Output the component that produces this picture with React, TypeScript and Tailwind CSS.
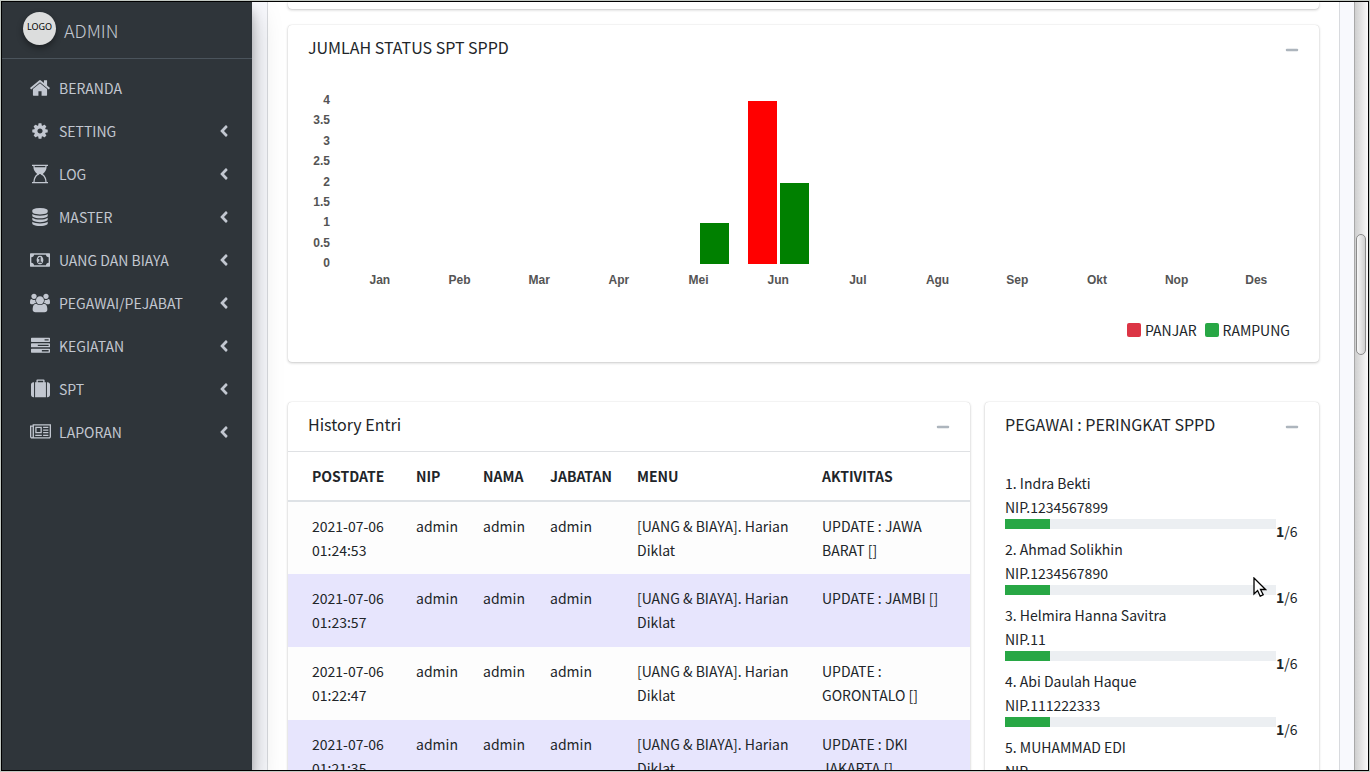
import type { ReactNode } from "react";
import { FaAngleLeft, FaMinus } from "react-icons/fa";

type Glyph = { box: string; d: string; width: string };

const glyphs: Record<string, Glyph> = {
  home: {
    box: "0 0 1792 1792",
    width: "w-[22px]",
    d: "M1472 992v480q0 26-19 45t-45 19h-384v-384h-256v384h-384q-26 0-45-19t-19-45v-480q0-1 .5-3t.5-3l575-474 575 474q1 2 1 6zm223-69l-62 74q-8 9-21 11h-3q-13 0-21-7l-692-577-692 577q-12 8-24 7-13-2-21-11l-62-74q-8-10-7-23.5t11-21.5l719-599q32-26 76-26t76 26l244 204v-195q0-14 9-23t23-9h192q14 0 23 9t9 23v408l219 182q10 8 11 21.5t-7 23.5z",
  },
  cog: {
    box: "0 0 1792 1792",
    width: "w-[18px]",
    d: "M1152 896q0-106-75-181t-181-75-181 75-75 181 75 181 181 75 181-75 75-181zm512-109v222q0 12-8 23t-20 13l-185 28q-19 54-39 91 35 50 107 138 10 12 10 25t-9 23q-27 37-99 108t-94 71q-12 0-26-9l-138-108q-44 23-91 38-16 136-29 186-7 28-36 28h-222q-14 0-24.5-8.5t-11.5-21.5l-28-184q-49-16-90-37l-141 107q-10 9-25 9-14 0-25-11-126-114-165-168-7-10-7-23 0-12 8-23 15-21 51-66.5t54-70.5q-27-50-41-99l-183-27q-13-2-21-12.5t-8-23.5v-222q0-12 8-23t19-13l186-28q14-46 39-92-40-57-107-138-10-12-10-24 0-10 9-23 26-36 98.5-107.5t94.5-71.5q13 0 26 10l138 107q44-23 91-38 16-136 29-186 7-28 36-28h222q14 0 24.5 8.5t11.5 21.5l28 184q49 16 90 37l142-107q9-9 24-9 13 0 25 10 129 119 165 170 7 8 7 22 0 12-8 23-15 21-51 66.5t-54 70.5q26 50 41 98l183 28q13 2 21 12.5t8 23.5z",
  },
  hourglass: {
    box: "0 0 1536 1792",
    width: "w-4",
    d: "M1408 128q0 261-106.5 461.5t-266.5 306.5q160 106 266.5 306.5t106.5 461.5h96q14 0 23 9t9 23v64q0 14-9 23t-23 9h-1472q-14 0-23-9t-9-23v-64q0-14 9-23t23-9h96q0-261 106.5-461.5t266.5-306.5q-160-106-266.5-306.5t-106.5-461.5h-96q-14 0-23-9t-9-23v-64q0-14 9-23t23-9h1472q14 0 23 9t9 23v64q0 14-9 23t-23 9h-96zM256 128q0 66 9 128h1006q9-61 9-128h-1024zM874 956q-19-7-30.5-23.5t-11.5-36.5h-128q0 20-11.5 36.5t-30.5 23.5q-77 29-149 92.5t-129.5 152.5-92.5 210-35 253h1024q0-132-35-253t-92.5-210-129.5-152.5-149-92.5z",
  },
  database: {
    box: "0 0 1792 1792",
    width: "w-[18px]",
    d: "M896 768q237 0 443-43t325-127v170q0 69-103 128t-280 93.5-385 34.5-385-34.5-280-93.5-103-128v-170q119 84 325 127t443 43zm0 768q237 0 443-43t325-127v170q0 69-103 128t-280 93.5-385 34.5-385-34.5-280-93.5-103-128v-170q119 84 325 127t443 43zm0-384q237 0 443-43t325-127v170q0 69-103 128t-280 93.5-385 34.5-385-34.5-280-93.5-103-128v-170q119 84 325 127t443 43zm0-1152q208 0 385 34.5t280 93.5 103 128v128q0 69-103 128t-280 93.5-385 34.5-385-34.5-280-93.5-103-128v-128q0-69 103-128t280-93.5 385-34.5z",
  },
  money: {
    box: "0 0 1920 1792",
    width: "w-5",
    d: "M768 1152h384v-96h-128v-448h-114l-148 137 77 80q42-37 55-57h2v288h-128v96zm512-256q0 70-21 142t-59.5 134-101.5 101-138 39-138-39-101.5-101-59.5-134-21-142 21-142 59.5-134 101.5-101 138-39 138 39 101.5 101 59.5 134 21 142zm512 256v-512q-106 0-181-75t-75-181h-1152q0 106-75 181t-181 75v512q106 0 181 75t75 181h1152q0-106 75-181t181-75zm128-832v1152q0 26-19 45t-45 19h-1792q-26 0-45-19t-19-45v-1152q0-26 19-45t45-19h1792q26 0 45 19t19 45z",
  },
  group: {
    box: "64 0 1920 1792",
    width: "w-5",
    d: "M657 896q-162 5-265 128h-134q-82 0-138-40.5t-56-118.5q0-353 124-353 6 0 43.5 21t97.5 42.5 119 21.5q67 0 133-23-5 37-5 66 0 139 81 256zm1071 637q0 120-73 189.5t-194 69.5h-874q-121 0-194-69.5t-73-189.5q0-53 3.5-103.5t14-109 26.5-108.5 43-97.5 62-81 85.5-53.5 111.5-20q10 0 43 21.5t73 48 107 48 135 21.5 135-21.5 107-48 73-48 43-21.5q61 0 111.5 20t85.5 53.5 62 81 43 97.5 26.5 108.5 14 109 3.5 103.5zm-1024-1277q0 106-75 181t-181 75-181-75-75-181 75-181 181-75 181 75 75 181zm704 384q0 159-112.5 271.5t-271.5 112.5-271.5-112.5-112.5-271.5 112.5-271.5 271.5-112.5 271.5 112.5 112.5 271.5zm576 225q0 78-56 118.5t-138 40.5h-134q-103-123-265-128 81-117 81-256 0-29-5-66 66 23 133 23 59 0 119-21.5t97.5-42.5 43.5-21q124 0 124 353zm-128-609q0 106-75 181t-181 75-181-75-75-181 75-181 181-75 181 75 75 181z",
  },
  tasks: {
    box: "0 0 1792 1792",
    width: "w-[19px]",
    d: "M1024 1408h640v-128h-640v128zm-384-512h1024v-128h-1024v128zm640-512h384v-128h-384v128zm512 832v256q0 26-19 45t-45 19h-1664q-26 0-45-19t-19-45v-256q0-26 19-45t45-19h1664q26 0 45 19t19 45zm0-512v256q0 26-19 45t-45 19h-1664q-26 0-45-19t-19-45v-256q0-26 19-45t45-19h1664q26 0 45 19t19 45zm0-512v256q0 26-19 45t-45 19h-1664q-26 0-45-19t-19-45v-256q0-26 19-45t45-19h1664q26 0 45 19t19 45z",
  },
  suitcase: {
    box: "0 0 1792 1792",
    width: "w-[19px]",
    d: "M640 256h512v-128h-512v128zm-352 0v1408h-64q-92 0-158-66t-66-158v-960q0-92 66-158t158-66h64zm1120 0v1408h-1024v-1408h128v-160q0-40 28-68t68-28h576q40 0 68 28t28 68v160h128zm384 224v960q0 92-66 158t-158 66h-64v-1408h64q92 0 158 66t66 158z",
  },
  newspaper: {
    box: "0 0 2048 1792",
    width: "w-[21px]",
    d: "M1024 512h-384v384h384v-384zm128 640v128h-640v-128h640zm0-768v640h-640v-640h640zm640 768v128h-512v-128h512zm0-256v128h-512v-128h512zm0-256v128h-512v-128h512zm0-256v128h-512v-128h512zm-1536 960v-960h-128v960q0 26 19 45t45 19 45-19 19-45zm1664 0v-1088h-1536v1088q0 33-11 64h1483q26 0 45-19t19-45zm128-1216v1216q0 80-56 136t-136 56h-1664q-80 0-136-56t-56-136v-1088h256v-128h1792z",
  },
};

const menu = [
  { label: "BERANDA", icon: "home", nested: false },
  { label: "SETTING", icon: "cog", nested: true },
  { label: "LOG", icon: "hourglass", nested: true },
  { label: "MASTER", icon: "database", nested: true },
  { label: "UANG DAN BIAYA", icon: "money", nested: true },
  { label: "PEGAWAI/PEJABAT", icon: "group", nested: true },
  { label: "KEGIATAN", icon: "tasks", nested: true },
  { label: "SPT", icon: "suitcase", nested: true },
  { label: "LAPORAN", icon: "newspaper", nested: true },
];

const months = [
  { name: "Jan", panjar: 0, rampung: 0 },
  { name: "Peb", panjar: 0, rampung: 0 },
  { name: "Mar", panjar: 0, rampung: 0 },
  { name: "Apr", panjar: 0, rampung: 0 },
  { name: "Mei", panjar: 0, rampung: 1 },
  { name: "Jun", panjar: 4, rampung: 2 },
  { name: "Jul", panjar: 0, rampung: 0 },
  { name: "Agu", panjar: 0, rampung: 0 },
  { name: "Sep", panjar: 0, rampung: 0 },
  { name: "Okt", panjar: 0, rampung: 0 },
  { name: "Nop", panjar: 0, rampung: 0 },
  { name: "Des", panjar: 0, rampung: 0 },
];
const scale = ["4", "3.5", "3", "2.5", "2", "1.5", "1", "0.5", "0"];

const history = [
  { date: "2021-07-06 01:24:53", action: "UPDATE : JAWA BARAT []" },
  { date: "2021-07-06 01:23:57", action: "UPDATE : JAMBI []" },
  { date: "2021-07-06 01:22:47", action: "UPDATE : GORONTALO []" },
  { date: "2021-07-06 01:21:35", action: "UPDATE : DKI JAKARTA []" },
];

const ranking = [
  { name: "Indra Bekti", nip: "1234567899" },
  { name: "Ahmad Solikhin", nip: "1234567890" },
  { name: "Helmira Hanna Savitra", nip: "11" },
  { name: "Abi Daulah Haque", nip: "111222333" },
  { name: "MUHAMMAD EDI", nip: "" },
];

function MenuIcon({ name }: { name: string }) {
  const g = glyphs[name];
  return (
    <span className="flex w-[22px] shrink-0 justify-center">
      <svg viewBox={g.box} className={`${g.width} h-[22px]`} fill="currentColor" aria-hidden="true">
        <path d={g.d} />
      </svg>
    </span>
  );
}

function Card({ title, ruled, children }: { title: string; ruled?: boolean; children: ReactNode }) {
  return (
    <section className="min-w-0 rounded bg-white shadow-[0_0_1px_rgba(0,0,0,0.2),0_1px_3px_rgba(0,0,0,0.2)]">
      <header
        className={`flex h-[50px] items-start justify-between px-5 pt-2.5 ${ruled ? "border-b border-[#dfe1e4]" : ""}`}
      >
        <h3 className="text-[16px] leading-6">{title}</h3>
        <button type="button" aria-label={`Collapse ${title}`} className="pt-2 text-[#adb5bd]">
          <FaMinus className="size-3.5" />
        </button>
      </header>
      {children}
    </section>
  );
}

function Sidebar() {
  return (
    <aside className="z-10 w-[250px] shrink-0 bg-[#2f353a] text-[#c2c7d0] shadow-[0_14px_28px_rgba(0,0,0,0.25),0_10px_10px_rgba(0,0,0,0.22)]">
      <a href="#" className="flex h-[57px] items-center gap-2 border-b border-[#4b545c] px-[21px]">
        <span className="-mt-1 flex size-[33px] items-center justify-center rounded-full bg-[#dcdddd] pb-0.5 font-['Noto_Sans',sans-serif] text-[9px] text-black shadow-[0_3px_6px_rgba(0,0,0,0.4)]">
          LOGO
        </span>
        <span className="text-[18px] leading-6 font-light">ADMIN</span>
      </a>
      <nav className="flex flex-col gap-[3px] px-2 pt-[9px]">
        {menu.map((m) => (
          <a key={m.label} href="#" className="flex h-10 items-center gap-2 pr-[11px] pl-[19px] leading-6">
            <MenuIcon name={m.icon} />
            <span className="flex-1">{m.label}</span>
            {m.nested && <FaAngleLeft className="size-[18px]" />}
          </a>
        ))}
      </nav>
    </aside>
  );
}

function Chart() {
  return (
    <div className="pt-[18px] pr-[23px] pl-5">
      <div className="flex font-['Liberation_Sans',Arial,sans-serif] text-[12px] leading-[14px] font-bold text-[#545454]">
        <div className="flex h-[178px] w-[22px] shrink-0 flex-col justify-between pb-px text-right">
          {scale.map((s) => (
            <span key={s}>{s}</span>
          ))}
        </div>
        <div className="ml-2.5 flex flex-1">
          {months.map((m) => (
            <div key={m.name} className="flex-1 pt-2 text-center">
              <div className="flex h-[163px] items-end justify-center gap-[3px]">
                <div className="w-[29px] bg-[#ff0000]" style={{ height: `${m.panjar * 25}%` }} />
                <div className="w-[29px] bg-[#008000]" style={{ height: `${m.rampung * 25}%` }} />
              </div>
              <div className="pt-[9px]">{m.name}</div>
            </div>
          ))}
        </div>
      </div>
      <div className="flex justify-end gap-2 pt-[31px] pr-1.5 pb-5 leading-6">
        <span className="flex items-center gap-1">
          <i className="size-3.5 rounded-[2px] bg-[#dc3545]" />
          PANJAR
        </span>
        <span className="flex items-center gap-1">
          <i className="size-3.5 rounded-[2px] bg-[#28a745]" />
          RAMPUNG
        </span>
      </div>
    </div>
  );
}

function HistoryTable() {
  return (
    <table className="w-full table-fixed border-collapse text-left">
      <thead>
        <tr className="border-b-2 border-[#dee2e6] leading-6">
          <th className="w-[116px] py-3 pr-3 pl-6">POSTDATE</th>
          <th className="w-[67px] p-3">NIP</th>
          <th className="w-[67px] p-3">NAMA</th>
          <th className="w-[87px] p-3">JABATAN</th>
          <th className="w-[185px] p-3">MENU</th>
          <th className="p-3">AKTIVITAS</th>
        </tr>
      </thead>
      <tbody>
        {history.map((h) => (
          <tr key={h.date} className="h-[73px] align-top leading-6 odd:bg-[#fdfdfd] even:bg-[#e7e5fd]">
            <td className="py-3 pr-3 pl-6">{h.date}</td>
            <td className="p-3">admin</td>
            <td className="p-3">admin</td>
            <td className="p-3">admin</td>
            <td className="p-3">[UANG &amp; BIAYA]. Harian Diklat</td>
            <td className="p-3">{h.action}</td>
          </tr>
        ))}
      </tbody>
    </table>
  );
}

function Ranking() {
  return (
    <ol className="px-5 pt-[19px]">
      {ranking.map((r, i) => (
        <li key={r.name} className="leading-6">
          <div>
            {i + 1}. {r.name}
          </div>
          <div>NIP.{r.nip}</div>
          <div className="flex h-[18px]">
            <div className="h-2.5 flex-1 bg-[#eceff2]">
              <div className="h-full w-1/6 bg-[#28a745]" />
            </div>
            <span className="w-[23px]">
              <b>1</b>/6
            </span>
          </div>
        </li>
      ))}
    </ol>
  );
}

export default function App() {
  return (
    <div className="h-screen overflow-hidden border border-[#c3c9c3] font-['Noto_Sans_CJK_SC',sans-serif] text-[14px] text-[#212529]">
      <div className="relative flex h-full overflow-hidden border border-black bg-[#f8f9fd]">
        <Sidebar />
        <main className="min-w-0 flex-1 pr-3.5 pl-[15px]">
          <div className="h-full border-x border-[#d8dade] bg-white px-5">
            <div className="h-[7px] rounded-b bg-white shadow-[0_0_1px_rgba(0,0,0,0.2),0_1px_3px_rgba(0,0,0,0.2)]" />
            <div className="pt-4">
              <Card title="JUMLAH STATUS SPT SPPD">
                <Chart />
              </Card>
            </div>
            <div className="grid grid-cols-[682fr_334fr] gap-[15px] pt-10">
              <Card title="History Entri" ruled>
                <HistoryTable />
              </Card>
              <Card title="PEGAWAI : PERINGKAT SPPD">
                <Ranking />
              </Card>
            </div>
          </div>
        </main>
        <div className="w-3.5 shrink-0 border-l border-[#a9a9a9] bg-linear-to-r from-[#cfcfcf] to-[#fafafa] pt-[232px] pl-px">
          <div className="h-[121px] w-2.5 rounded-full border border-[#8c8c8c] bg-linear-to-r from-[#f8f8f8] to-[#cfcfcf]" />
        </div>
        <svg className="absolute top-[575px] left-[1251px] z-20 h-5 w-3.5" viewBox="0 0 14 20" aria-hidden="true">
          <path
            d="M1 1v16l3.600-3.400 2.600 5.600 3-1.400-2.700-5.300h5z"
            fill="#fff"
            stroke="#000"
            strokeWidth="1.300"
          />
        </svg>
      </div>
    </div>
  );
}
